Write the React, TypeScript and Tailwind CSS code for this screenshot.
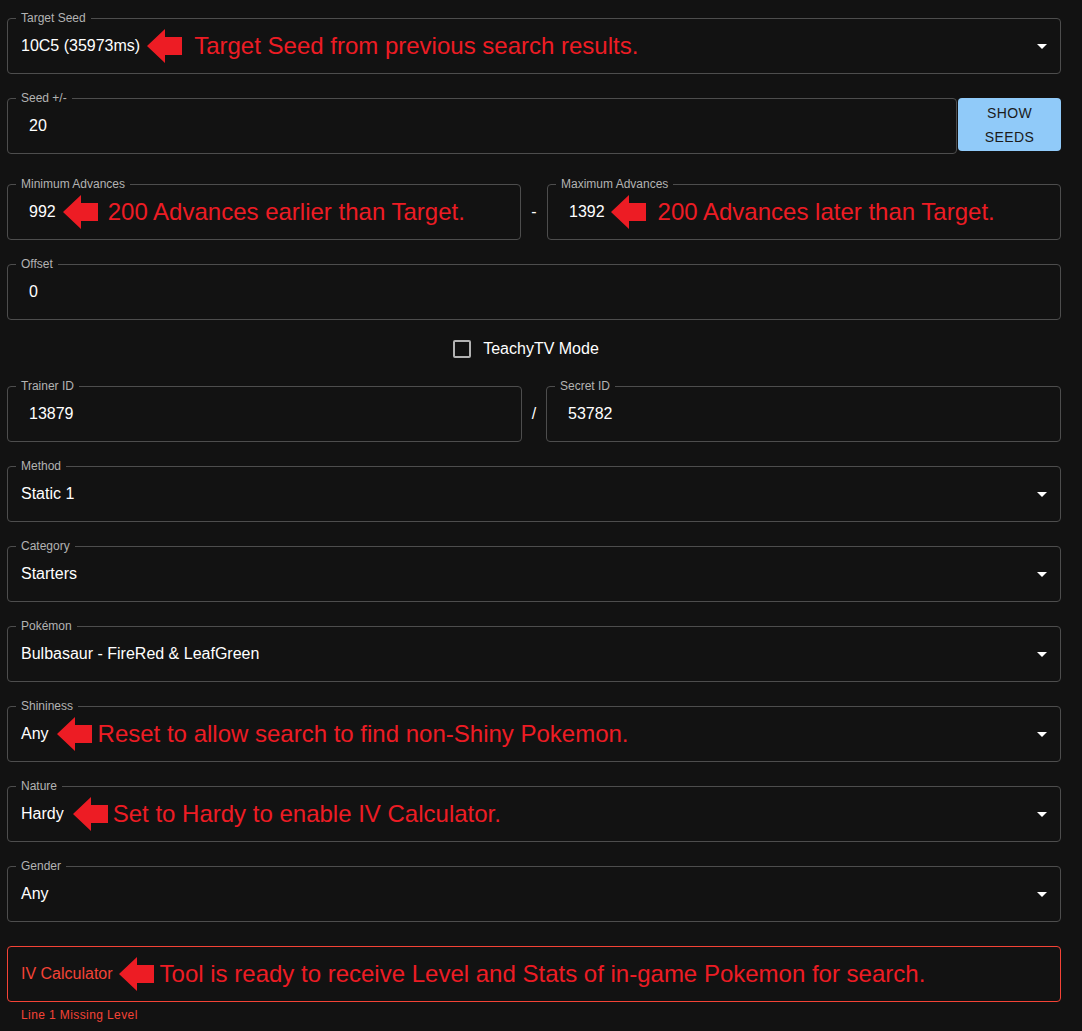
import React from "react";

function Arrow() {
  return (
    <svg width="35" height="34" viewBox="0 0 35 34" className="shrink-0">
      <polygon points="0,17 18,0 18,8 35,8 35,26 18,26 18,34" fill="#ed1c24" />
    </svg>
  );
}

function Note({ text, gapBefore = 7, gapAfter = 11 }: { text: string; gapBefore?: number; gapAfter?: number }) {
  return (
    <div className="flex items-center" style={{ marginLeft: gapBefore }}>
      <Arrow />
      <span className="text-[24px] leading-[28px] text-[#ed1c24] whitespace-nowrap" style={{ marginLeft: gapAfter }}>
        {text}
      </span>
    </div>
  );
}

function DropIcon() {
  return (
    <svg width="24" height="24" viewBox="0 0 24 24" className="shrink-0">
      <path d="M7 10l5 5 5-5z" fill="#ffffff" />
    </svg>
  );
}

function Field({
  label,
  children,
  select = false,
  number = false,
  error = false,
  className,
}: {
  label?: string;
  children: React.ReactNode;
  select?: boolean;
  number?: boolean;
  error?: boolean;
  className?: string;
}) {
  return (
    <div
      className={
        "relative h-[56px] rounded-[4px] border flex items-center " +
        (error ? "border-[#f44336] " : "border-[#4d4d4d] ") +
        (number ? "pl-[21px] " : "pl-[13px] ") +
        (className ?? "")
      }
    >
      {label && (
        <span className="absolute left-[8px] top-[-9px] px-[5px] h-[16px] leading-[16px] text-[12px] text-[#b3b3b3] bg-[#121212] whitespace-nowrap">
          {label}
        </span>
      )}
      <div className="flex-1 flex items-center text-[16px] text-white">{children}</div>
      {select && (
        <div className="pr-[6px] flex items-center">
          <DropIcon />
        </div>
      )}
    </div>
  );
}

export default function App() {
  return (
    <div className="min-h-screen w-full bg-[#121212] text-white" style={{ fontFamily: '"Liberation Sans", Arial, sans-serif' }}>
      <div className="pl-[7px] w-[1061px] pt-[18px] pb-[6px]">
        <Field label="Target Seed" select>
          <span>10C5 (35973ms)</span>
          <Note text="Target Seed from previous search results." gapBefore={7} gapAfter={12} />
        </Field>

        <div className="mt-[24px] flex items-start gap-[1px]">
          <Field label="Seed +/-" number className="flex-1">
            <span>20</span>
          </Field>
          <button className="w-[103px] h-[53px] rounded-[4px] bg-[#90caf9] text-[#1b1b1b] text-[14px] leading-[24px] tracking-[0.4px] uppercase">
            Show
            <br />
            Seeds
          </button>
        </div>

        <div className="mt-[30px] grid grid-cols-[514px_26px_1fr]">
          <Field label="Minimum Advances" number>
            <span>992</span>
            <Note text="200 Advances earlier than Target." gapBefore={7} gapAfter={10} />
          </Field>
          <div className="flex items-center justify-center text-[16px] text-white">-</div>
          <Field label="Maximum Advances" number>
            <span>1392</span>
            <Note text="200 Advances later than Target." gapBefore={6} gapAfter={12} />
          </Field>
        </div>

        <Field label="Offset" number className="mt-[24px]">
          <span>0</span>
        </Field>

        <div className="mt-[10px] h-[38px] flex items-center justify-center pr-[16px]">
          <div className="w-[18px] h-[18px] rounded-[2px] border-2 border-[#b3b3b3]" />
          <span className="ml-[12px] text-[16px] text-white">TeachyTV Mode</span>
        </div>

        <div className="mt-[18px] grid grid-cols-[515px_24px_1fr]">
          <Field label="Trainer ID" number>
            <span>13879</span>
          </Field>
          <div className="flex items-center justify-center text-[16px] text-white">/</div>
          <Field label="Secret ID" number>
            <span>53782</span>
          </Field>
        </div>

        <Field label="Method" select className="mt-[24px]">
          <span>Static 1</span>
        </Field>

        <Field label="Category" select className="mt-[24px]">
          <span>Starters</span>
        </Field>

        <Field label="Pokémon" select className="mt-[24px]">
          <span>Bulbasaur - FireRed &amp; LeafGreen</span>
        </Field>

        <Field label="Shininess" select className="mt-[24px]">
          <span>Any</span>
          <Note text="Reset to allow search to find non-Shiny Pokemon." gapBefore={8} gapAfter={6} />
        </Field>

        <Field label="Nature" select className="mt-[24px]">
          <span>Hardy</span>
          <Note text="Set to Hardy to enable IV Calculator." gapBefore={9} gapAfter={5} />
        </Field>

        <Field label="Gender" select className="mt-[24px]">
          <span>Any</span>
        </Field>

        <Field error className="mt-[24px]">
          <span className="text-[#f44336]">IV Calculator</span>
          <Note text="Tool is ready to receive Level and Stats of in-game Pokemon for search." gapBefore={6} gapAfter={6} />
        </Field>
        <div className="mt-[3px] ml-[14px] text-[12px] leading-[20px] tracking-[0.4px] text-[#f44336]">
          Line 1 Missing Level
        </div>
      </div>
    </div>
  );
}
